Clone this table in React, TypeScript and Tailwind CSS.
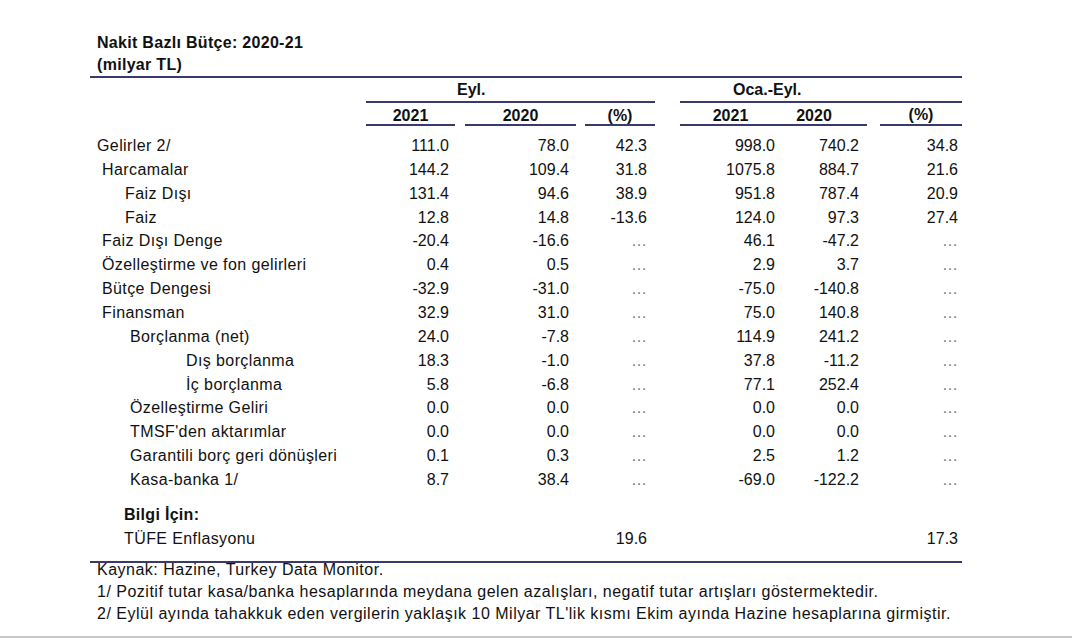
import React from "react";

type Row = {
  label: string;
  indent: string;
  v: [string, string, string, string, string, string];
};

const rows: Row[] = [
  { label: "Gelirler 2/", indent: "pl-[7px]", v: ["111.0", "78.0", "42.3", "998.0", "740.2", "34.8"] },
  { label: "Harcamalar", indent: "pl-[12px]", v: ["144.2", "109.4", "31.8", "1075.8", "884.7", "21.6"] },
  { label: "Faiz Dışı", indent: "pl-[35px]", v: ["131.4", "94.6", "38.9", "951.8", "787.4", "20.9"] },
  { label: "Faiz", indent: "pl-[35px]", v: ["12.8", "14.8", "-13.6", "124.0", "97.3", "27.4"] },
  { label: "Faiz Dışı Denge", indent: "pl-[12px]", v: ["-20.4", "-16.6", "…", "46.1", "-47.2", "…"] },
  { label: "Özelleştirme ve fon gelirleri", indent: "pl-[12px]", v: ["0.4", "0.5", "…", "2.9", "3.7", "…"] },
  { label: "Bütçe Dengesi", indent: "pl-[12px]", v: ["-32.9", "-31.0", "…", "-75.0", "-140.8", "…"] },
  { label: "Finansman", indent: "pl-[12px]", v: ["32.9", "31.0", "…", "75.0", "140.8", "…"] },
  { label: "Borçlanma (net)", indent: "pl-[40px]", v: ["24.0", "-7.8", "…", "114.9", "241.2", "…"] },
  { label: "Dış borçlanma", indent: "pl-[96px]", v: ["18.3", "-1.0", "…", "37.8", "-11.2", "…"] },
  { label: "İç borçlanma", indent: "pl-[96px]", v: ["5.8", "-6.8", "…", "77.1", "252.4", "…"] },
  { label: "Özelleştirme Geliri", indent: "pl-[40px]", v: ["0.0", "0.0", "…", "0.0", "0.0", "…"] },
  { label: "TMSF'den aktarımlar", indent: "pl-[40px]", v: ["0.0", "0.0", "…", "0.0", "0.0", "…"] },
  { label: "Garantili borç geri dönüşleri", indent: "pl-[40px]", v: ["0.1", "0.3", "…", "2.5", "1.2", "…"] },
  { label: "Kasa-banka 1/", indent: "pl-[40px]", v: ["8.7", "38.4", "…", "-69.0", "-122.2", "…"] },
];

function Val({ v, className }: { v: string; className: string }) {
  const dots = v === "…";
  return (
    <div className={`${className} text-right ${dots ? "text-[#777]" : ""}`}>{v}</div>
  );
}

function DataRow({ row }: { row: Row }) {
  const [a, b, c, d, e, f] = row.v;
  return (
    <div className="flex h-[23.86px] items-center">
      <div className={`w-[276px] whitespace-nowrap tracking-[0.4px] ${row.indent}`}>{row.label}</div>
      <Val v={a} className="w-[89px] pr-[6px]" />
      <div className="w-[10px]" />
      <Val v={b} className="w-[111px] pr-[7px]" />
      <div className="w-[9px]" />
      <Val v={c} className="w-[70px] pr-[8px]" />
      <div className="w-[25px]" />
      <Val v={d} className="w-[101px] pr-[6px]" />
      <Val v={e} className="w-[86px] pr-[8px]" />
      <div className="w-[13px]" />
      <Val v={f} className="w-[82px] pr-[4px]" />
    </div>
  );
}

const rule = "bg-[#3a3a6a]";

export default function App() {
  return (
    <div className="flex h-[638px] w-[1072px] flex-col bg-white font-['Liberation_Sans',Arial,sans-serif] text-[16px] text-[#111]">
      <div className="pl-[90px] pt-[32px]">
        <div className="w-[872px]">
          <div className="pl-[7px] font-bold leading-[22px] tracking-[0.3px]">
            <div>Nakit Bazlı Bütçe: 2020-21</div>
            <div>(milyar TL)</div>
          </div>
          <div className={`h-[2px] ${rule}`} />

          {/* group headers */}
          <div className="flex h-[23px] items-center font-bold">
            <div className="w-[276px]" />
            <div className="w-[289px] pl-[91px]">Eyl.</div>
            <div className="w-[25px]" />
            <div className="w-[282px] pl-[53px]">Oca.-Eyl.</div>
          </div>
          <div className="flex h-[2px]">
            <div className="w-[276px]" />
            <div className={`w-[289px] ${rule}`} />
            <div className="w-[25px]" />
            <div className={`w-[282px] ${rule}`} />
          </div>

          {/* year headers */}
          <div className="flex h-[21px] items-center pt-[4px] font-bold">
            <div className="w-[276px]" />
            <div className="w-[89px] text-center">2021</div>
            <div className="w-[10px]" />
            <div className="w-[111px] text-center">2020</div>
            <div className="w-[9px]" />
            <div className="w-[70px] text-center">(%)</div>
            <div className="w-[25px]" />
            <div className="w-[101px] text-center">2021</div>
            <div className="w-[86px] pr-[20px] text-center">2020</div>
            <div className="w-[13px]" />
            <div className="w-[82px] pb-[2px] text-center">(%)</div>
          </div>
          <div className="flex h-[2px]">
            <div className="w-[276px]" />
            <div className={`w-[89px] ${rule}`} />
            <div className="w-[10px]" />
            <div className={`w-[111px] ${rule}`} />
            <div className="w-[9px]" />
            <div className={`w-[70px] ${rule}`} />
            <div className="w-[25px]" />
            <div className={`w-[187px] ${rule}`} />
            <div className="w-[13px]" />
            <div className={`w-[82px] ${rule}`} />
          </div>

          <div className="mt-[8px]">
            {rows.map((r) => (
              <DataRow key={r.label} row={r} />
            ))}
          </div>

          <div className="mt-[11px] flex h-[24px] items-center pl-[34px] font-bold tracking-[0.3px]">
            Bilgi İçin:
          </div>
          <div className="flex h-[24px] items-center">
            <div className="w-[276px] pl-[34px] tracking-[0.4px]">TÜFE Enflasyonu</div>
            <div className="w-[89px]" />
            <div className="w-[10px]" />
            <div className="w-[111px]" />
            <div className="w-[9px]" />
            <div className="w-[70px] pr-[8px] text-right">19.6</div>
            <div className="w-[25px]" />
            <div className="w-[101px]" />
            <div className="w-[86px]" />
            <div className="w-[13px]" />
            <div className="w-[82px] pr-[4px] text-right">17.3</div>
          </div>

          <div className={`mt-[10px] h-[2px] ${rule}`} />

          <div className="-mt-[4px] whitespace-nowrap pl-[7px] leading-[22px] tracking-[0.5px]">
            <div>Kaynak: Hazine, Turkey Data Monitor.</div>
            <div>
              1/ Pozitif tutar kasa/banka hesaplarında meydana gelen azalışları, negatif tutar artışları göstermektedir.
            </div>
            <div>
              2/ Eylül ayında tahakkuk eden vergilerin yaklaşık 10 Milyar TL'lik kısmı Ekim ayında Hazine hesaplarına girmiştir.
            </div>
          </div>
        </div>
      </div>
      <div className="flex-1" />
      <div className="h-[2px] w-full bg-[#c8c8c8]" />
    </div>
  );
}
